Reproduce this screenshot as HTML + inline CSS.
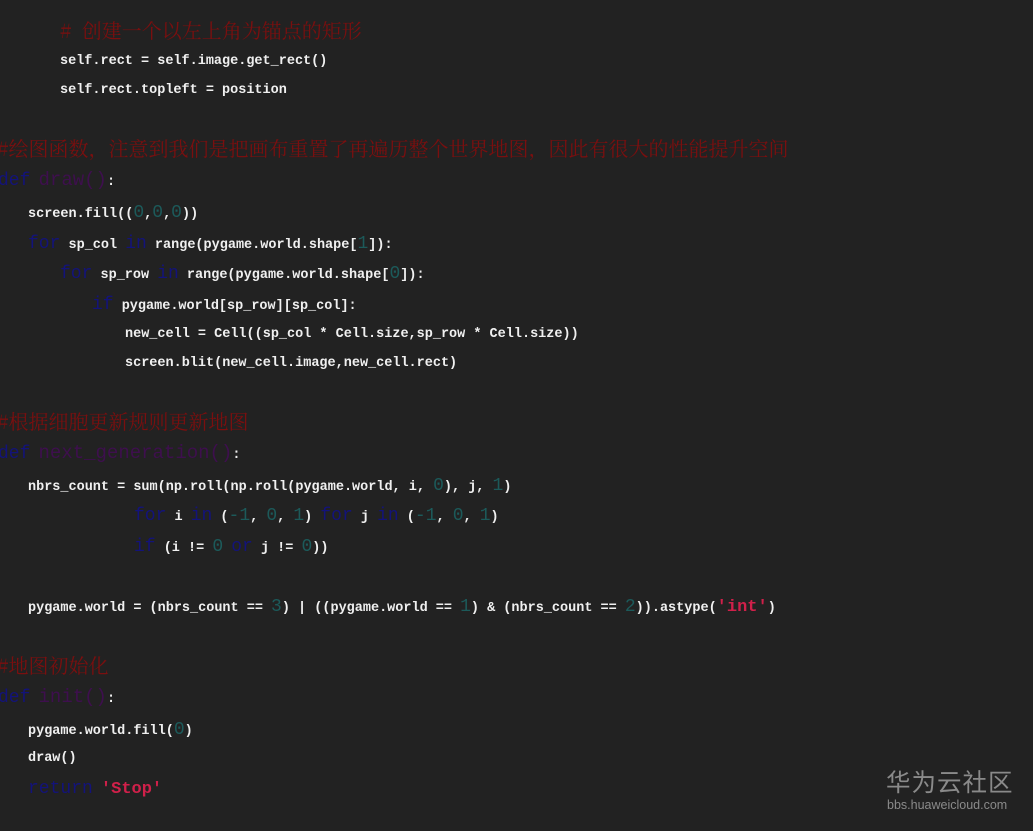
<!DOCTYPE html>
<html><head><meta charset="utf-8"><style>
html,body{margin:0;padding:0;}
body{width:1033px;height:831px;background:#222222;position:relative;overflow:hidden;font-family:"Liberation Mono",monospace;font-size:13.5px;color:#f0f0f0;font-weight:bold;}
.l{position:absolute;white-space:pre;line-height:20px;}
.c{font-family:"Noto Serif CJK SC","Liberation Serif",serif;font-weight:normal;font-size:20px;color:#7a0f0f;}
.k{color:#13137a;font-size:18px;font-weight:normal;}
.f{color:#3e0f4e;font-size:19px;font-weight:normal;}
.n{color:#1c5a5a;font-size:18px;font-weight:normal;}
.s{color:#d0204a;font-size:17px;}
.wm{position:absolute;left:886px;top:767px;color:#8a8a8a;font-family:"Noto Sans CJK SC",sans-serif;font-weight:normal;font-size:24.5px;letter-spacing:1px;line-height:30px;}
.wm2{position:absolute;left:887px;top:798px;color:#8a8a8a;font-family:"Liberation Sans",sans-serif;font-weight:normal;font-size:12.5px;}
</style></head><body>
<div class="l c" style="left:60px;top:20px">#  创建一个以左上角为锚点的矩形</div>
<div class="l" style="left:60px;top:52px">self.rect = self.image.get_rect()</div>
<div class="l" style="left:60px;top:81px">self.rect.topleft = position</div>
<div class="l c" style="left:-3px;top:138px">#绘图函数，注意到我们是把画布重置了再遍历整个世界地图，因此有很大的性能提升空间</div>
<div class="l" style="left:-2px;top:170px"><span class="k">def</span> <span class="f">draw()</span>:</div>
<div class="l" style="left:28px;top:203px">screen.fill((<span class="n">0</span>,<span class="n">0</span>,<span class="n">0</span>))</div>
<div class="l" style="left:28px;top:234px"><span class="k">for</span> sp_col <span class="k">in</span> range(pygame.world.shape[<span class="n">1</span>]):</div>
<div class="l" style="left:60px;top:264px"><span class="k">for</span> sp_row <span class="k">in</span> range(pygame.world.shape[<span class="n">0</span>]):</div>
<div class="l" style="left:92px;top:295px"><span class="k">if</span> pygame.world[sp_row][sp_col]:</div>
<div class="l" style="left:125px;top:325px">new_cell = Cell((sp_col * Cell.size,sp_row * Cell.size))</div>
<div class="l" style="left:125px;top:354px">screen.blit(new_cell.image,new_cell.rect)</div>
<div class="l c" style="left:-3px;top:411px">#根据细胞更新规则更新地图</div>
<div class="l" style="left:-2px;top:443px"><span class="k">def</span> <span class="f">next_generation()</span>:</div>
<div class="l" style="left:28px;top:476px">nbrs_count = sum(np.roll(np.roll(pygame.world, i, <span class="n">0</span>), j, <span class="n">1</span>)</div>
<div class="l" style="left:134px;top:506px"><span class="k">for</span> i <span class="k">in</span> (<span class="n">-1</span>, <span class="n">0</span>, <span class="n">1</span>) <span class="k">for</span> j <span class="k">in</span> (<span class="n">-1</span>, <span class="n">0</span>, <span class="n">1</span>)</div>
<div class="l" style="left:134px;top:537px"><span class="k">if</span> (i != <span class="n">0</span> <span class="k">or</span> j != <span class="n">0</span>))</div>
<div class="l" style="left:28px;top:597px">pygame.world = (nbrs_count == <span class="n">3</span>) | ((pygame.world == <span class="n">1</span>) &amp; (nbrs_count == <span class="n">2</span>)).astype(<span class="s">'int'</span>)</div>
<div class="l c" style="left:-3px;top:655px">#地图初始化</div>
<div class="l" style="left:-2px;top:687px"><span class="k">def</span> <span class="f">init()</span>:</div>
<div class="l" style="left:28px;top:720px">pygame.world.fill(<span class="n">0</span>)</div>
<div class="l" style="left:28px;top:749px">draw()</div>
<div class="l" style="left:28px;top:779px"><span class="k">return</span> <span class="s">'Stop'</span></div>
<div class="wm">华为云社区</div>
<div class="wm2">bbs.huaweicloud.com</div>
</body></html>
